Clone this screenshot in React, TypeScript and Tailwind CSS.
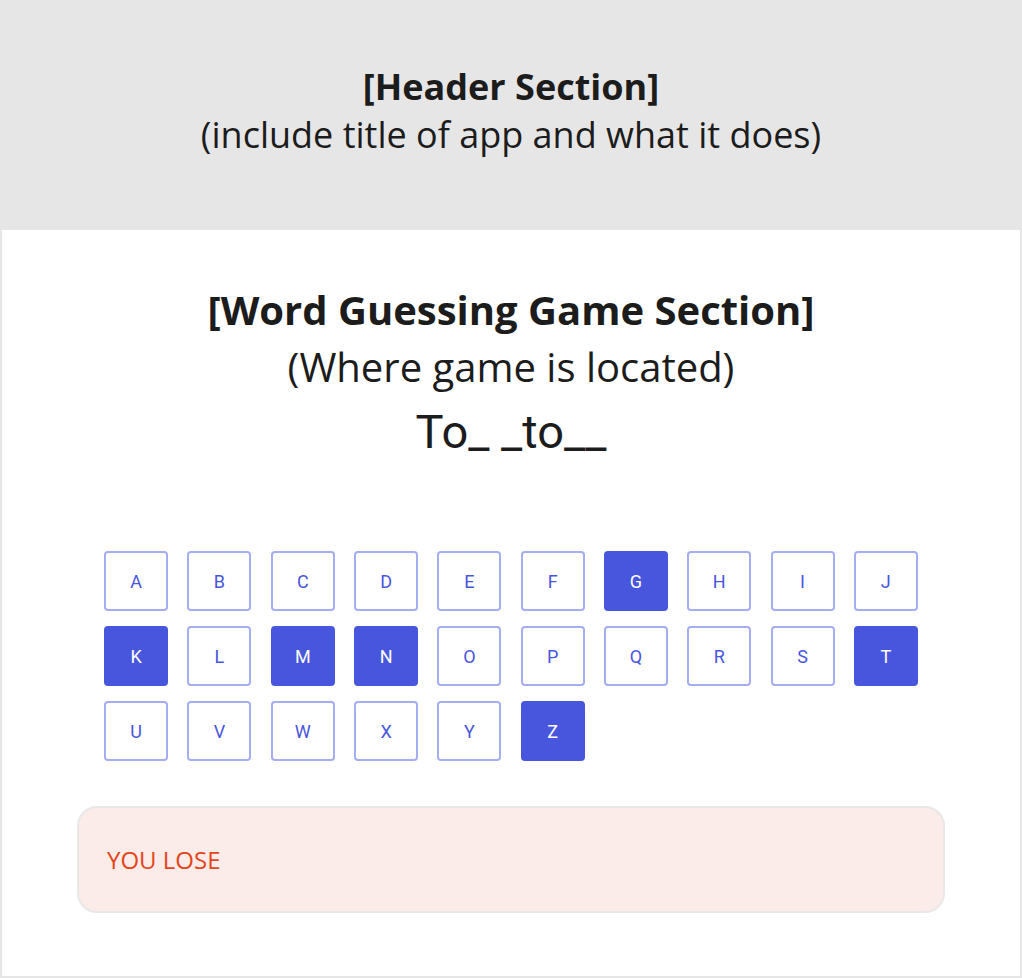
import { useState } from "react";

const LETTERS = "ABCDEFGHIJKLMNOPQRSTUVWXYZ".split("");

function LetterButton({ letter, used, onPick }: { letter: string; used: boolean; onPick: (l: string) => void }) {
  return (
    <button
      onClick={() => onPick(letter)}
      className={
        used
          ? "h-[60px] w-[64px] rounded-[4px] border-2 border-[#4856de] bg-[#4856de] text-[18px] text-white"
          : "h-[60px] w-[64px] rounded-[4px] border-2 border-[#a6aef2] bg-white text-[18px] text-[#4856de]"
      }
    >
      {letter}
    </button>
  );
}

function App() {
  const [guessed, setGuessed] = useState<string[]>(["G", "K", "M", "N", "T", "Z"]);

  const pick = (l: string) => {
    if (!guessed.includes(l)) setGuessed((prev) => [...prev, l]);
  };

  return (
    <div className="flex min-h-[978px] w-[1022px] flex-col border-2 border-[#e6e6e6] font-['Open_Sans',sans-serif] text-[#1c1c1c]">
      {/* header */}
      <header className="flex h-[228px] flex-col items-center justify-center bg-[#e6e6e6] pb-[10px] text-[36px] leading-[48px]">
        <h1 className="font-bold">[Header Section]</h1>
        <p>(include title of app and what it does)</p>
      </header>

      {/* game */}
      <main className="flex flex-1 flex-col items-center pt-[52px]">
        <h2 className="text-[40px] font-bold leading-[56px]">[Word Guessing Game Section]</h2>
        <p className="text-[40px] leading-[58px]">(Where game is located)</p>
        <p className="font-['Roboto',sans-serif] text-[47px] leading-[72px]">To_ _to__</p>

        <div className="mt-[83px] grid grid-cols-[repeat(10,64px)] gap-x-[19.3px] gap-y-[15px] font-['Roboto',sans-serif]">
          {LETTERS.map((l) => (
            <LetterButton key={l} letter={l} used={guessed.includes(l)} onPick={pick} />
          ))}
        </div>

        <div className="mt-[45px] flex h-[107px] w-[868px] items-center rounded-[20px] border-2 border-[#e8e8e8] bg-[#fbebe9] px-[28px]">
          <span className="text-[24px] text-[#e5451c]">YOU LOSE</span>
        </div>
      </main>
    </div>
  );
}

export default App;
